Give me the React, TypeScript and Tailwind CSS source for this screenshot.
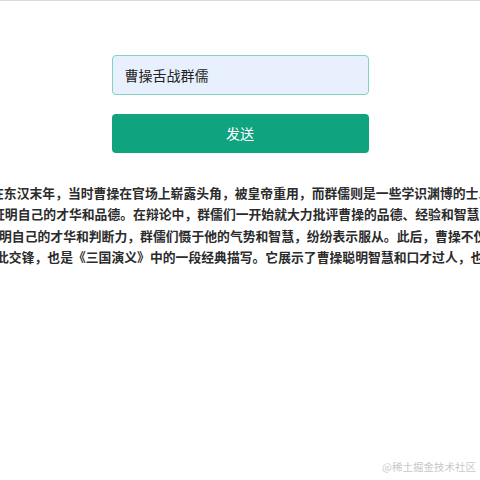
import { useState } from "react";

const lines = [
  { text: "在东汉末年，当时曹操在官场上崭露头角，被皇帝重用，而群儒则是一些学识渊博的士人", offset: "-ml-[9px]" },
  { text: "证明自己的才华和品德。在辩论中，群儒们一开始就大力批评曹操的品德、经验和智慧，", offset: "-ml-[8px]" },
  { text: "明自己的才华和判断力，群儒们慑于他的气势和智慧，纷纷表示服从。此后，曹操不仅", offset: "-ml-[1px]" },
  { text: "此交锋，也是《三国演义》中的一段经典描写。它展示了曹操聪明智慧和口才过人，也", offset: "-ml-[4px]" },
];

export default function App() {
  const [topic, setTopic] = useState("曹操舌战群儒");

  return (
    <main
      className="relative min-h-[480px] bg-white border-t border-[#dadada]"
      style={{ fontFamily: '"Noto Sans CJK SC", "Liberation Sans", sans-serif' }}
    >
      {/* Form */}
      <div className="flex flex-col items-center pt-[54px]">
        <input
          value={topic}
          onChange={(e) => setTopic(e.target.value)}
          className="w-[257px] h-[40px] rounded-[4px] border border-[#7fd3c0] bg-[#e8f0fe] px-[12px] text-[14px] text-[#222] outline-none"
        />
        <button className="mt-[19px] w-[257px] h-[39px] rounded-[4px] bg-[#10a37f] text-[14px] text-white">
          发送
        </button>
      </div>

      {/* Answer */}
      <div className="mt-[29px] w-full overflow-hidden text-[12.8px] tracking-[0.03px] leading-[21.3px] font-bold text-[#2b2b2b]">
        {lines.map((l, i) => (
          <div key={i} className={"whitespace-nowrap " + l.offset}>
            {l.text}
          </div>
        ))}
      </div>

      <span className="absolute right-[4px] bottom-[5px] text-[10.5px] text-[#c9c9c9]">
        @稀土掘金技术社区
      </span>
    </main>
  );
}
